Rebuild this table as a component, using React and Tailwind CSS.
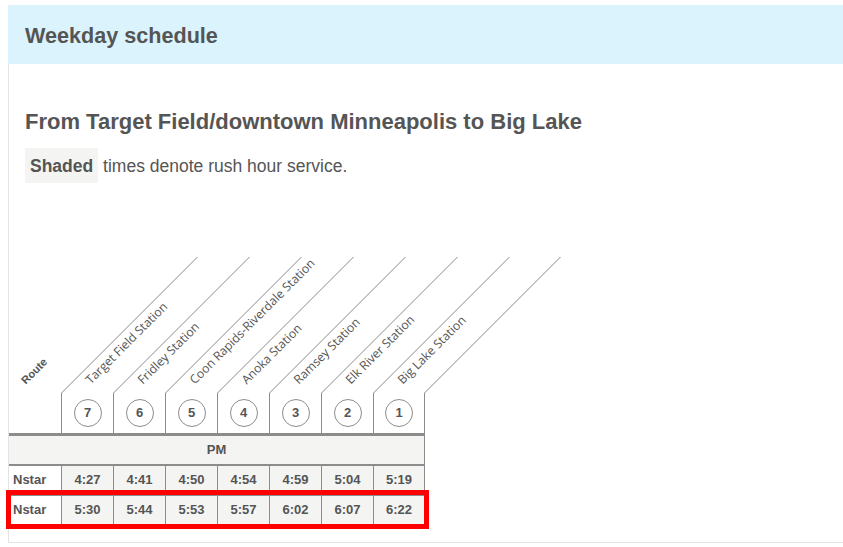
import React from "react";

const stations = [
  { n: 7, name: "Target Field Station" },
  { n: 6, name: "Fridley Station" },
  { n: 5, name: "Coon Rapids-Riverdale Station" },
  { n: 4, name: "Anoka Station" },
  { n: 3, name: "Ramsey Station" },
  { n: 2, name: "Elk River Station" },
  { n: 1, name: "Big Lake Station" },
];

const trips = [
  ["4:27", "4:41", "4:50", "4:54", "4:59", "5:04", "5:19"],
  ["5:30", "5:44", "5:53", "5:57", "6:02", "6:07", "6:22"],
];

function StationHead({ station, last }) {
  return (
    <div className="relative h-[176px] w-[52px]">
      {/* slanted divider going up-right */}
      <div
        className={`absolute bottom-[40px] left-0 h-[136px] w-[52px] origin-bottom-left -skew-x-45 border-l border-[#8c8c8c] ${
          last ? "border-r" : ""
        }`}
      />
      <span className="absolute bottom-[45px] left-[27px] origin-left -rotate-45 whitespace-nowrap font-['Open_Sans',sans-serif] text-[12.2px] leading-[12px] text-[#555]">
        {station.name}
      </span>
      <div
        className={`absolute bottom-0 left-0 flex h-[40px] w-[52px] items-center justify-center border-l border-[#8c8c8c] ${
          last ? "border-r" : ""
        }`}
      >
        <div className="flex h-[28px] w-[28px] items-center justify-center rounded-full border border-[#8c8c8c] text-[13px] font-bold">
          {station.n}
        </div>
      </div>
    </div>
  );
}

export default function App() {
  return (
    <div className="min-h-[547px] bg-white pt-[5px] font-['Liberation_Sans',Arial,sans-serif] text-[#555]">
      <div className="ml-[8px]">
        <div className="flex h-[59px] items-center bg-[#dbf3fd] px-[17px] pt-[4px]">
          <h1 className="text-[21.6px] font-bold">Weekday schedule</h1>
        </div>

        <div className="border-b border-l border-[#e3e3e3] pb-[16px]">
          <h2 className="pl-[16px] pt-[45px] text-[22px] font-bold leading-[26px]">
            From Target Field/downtown Minneapolis to Big Lake
          </h2>
          <p className="mt-[13px] pl-[16px] text-[17.5px] leading-[25px]">
            <span className="inline-block bg-[#f4f4f2] px-[5px] pb-[4px] pt-[6px] font-bold">Shaded</span>{" "}
            times denote rush hour service.
          </p>

          <div className="relative mt-[74px] w-[416px]">
            <div className="flex">
              <div className="relative h-[176px] w-[52px]">
                <span className="absolute bottom-[45px] left-[14px] origin-left -rotate-45 whitespace-nowrap text-[11px] font-bold leading-[12px]">
                  Route
                </span>
              </div>
              {stations.map((s, i) => (
                <StationHead key={s.n} station={s} last={i === stations.length - 1} />
              ))}
            </div>

            <div className="h-[3px] bg-[#8c8c8c]" />

            <div className="flex h-[30px] items-center justify-center border-b-2 border-r border-[#8c8c8c] bg-[#f4f4f2] text-[13px] font-bold">
              PM
            </div>

            {trips.map((row, r) => (
              <div key={r} className="flex h-[30px] border-b-2 border-[#8c8c8c] text-[13px] font-bold">
                <div className="flex w-[52px] items-center bg-white pl-[4px]">Nstar</div>
                {row.map((t, c) => (
                  <div
                    key={c}
                    className={`flex w-[52px] items-center justify-center border-l border-[#8c8c8c] bg-[#f4f4f2] ${
                      c === row.length - 1 ? "border-r" : ""
                    }`}
                  >
                    {t}
                  </div>
                ))}
              </div>
            ))}

            {/* highlight around second trip */}
            <div className="pointer-events-none absolute left-[-3px] top-[233px] h-[39px] w-[423px] border-[5px] border-[#ff0000]" />
          </div>
        </div>
      </div>
    </div>
  );
}
